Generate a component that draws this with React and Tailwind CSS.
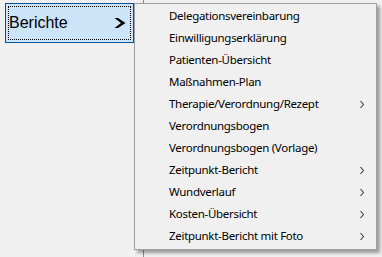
import React from "react";

const items = [
  ["Delegationsvereinbarung", false],
  ["Einwilligungserklärung", false],
  ["Patienten-Übersicht", false],
  ["Maßnahmen-Plan", false],
  ["Therapie/Verordnung/Rezept", true],
  ["Verordnungsbogen", false],
  ["Verordnungsbogen (Vorlage)", false],
  ["Zeitpunkt-Bericht", true],
  ["Wundverlauf", true],
  ["Kosten-Übersicht", true],
  ["Zeitpunkt-Bericht mit Foto", true],
];

function Chevron() {
  return (
    <svg width="6" height="9" viewBox="0 0 6 9" className="block">
      <path d="M1.5 1 L4.5 4.5 L1.5 8" fill="none" stroke="#404040" strokeWidth="1.1" />
    </svg>
  );
}

export default function App() {
  return (
    <div className="relative w-[382px] h-[257px] bg-[#f0f0f0] overflow-hidden">
      <div className="flex h-full">
        <div className="w-[144px] h-full pl-[5px] pt-[3px] border-r border-[#8a8a8a]">
          <div className="w-[129px] h-[40px] bg-[#cce4f7] border border-[#005499] p-[2px]">
            <div
              className="h-full w-full border border-dotted border-black flex items-center justify-between pl-0 pr-[4px] text-[16px] text-black"
              style={{ fontFamily: '"Liberation Sans", Arial, sans-serif' }}
            >
              <span className="leading-none">Berichte</span>
              <svg width="12" height="10" viewBox="0 0 12 10" className="block">
                <path d="M0.5 0 L4 0 L11.5 5 L4 10 L0.5 10 L7 5 Z" fill="#000" />
              </svg>
            </div>
          </div>
        </div>
      </div>

      <div
        className="absolute left-[134px] top-[3px] w-[243px] h-[247px] bg-[#f0f0f0] border border-[#a0a0a0] pt-[1px] shadow-[3px_3px_3px_0px_rgba(0,0,0,0.35)] text-[11.5px] tracking-[-0.3px] text-black"
        style={{ fontFamily: '"Noto Sans", "Open Sans", sans-serif' }}
      >
        {items.map(([label, sub]) => (
          <div key={label} className="h-[22px] flex items-center pl-[34px] pr-[11px]">
            <span className="flex-1 leading-none">{label}</span>
            {sub && <Chevron />}
          </div>
        ))}
      </div>
    </div>
  );
}
